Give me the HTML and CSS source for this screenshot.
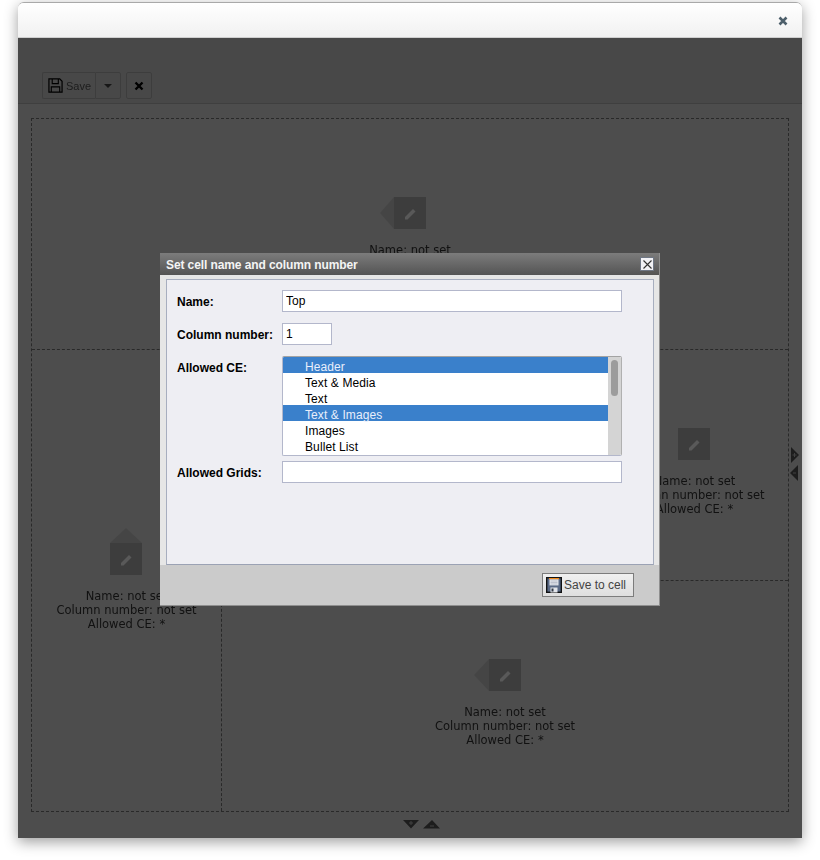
FILE: index.html
```html
<!DOCTYPE html>
<html lang="en">
<head>
<meta charset="utf-8">
<title>Grid editor</title>
<link rel="stylesheet" href="styles.css">
</head>
<body>
<svg class="defs" width="0" height="0" aria-hidden="true">
  <symbol id="pencil" viewBox="0 0 32 32">
    <path d="M11 20 L19 12 L21.5 14.5 L13.5 22.5 L11 22.5 Z" fill="#fff"/>
  </symbol>
</svg>
<div class="page">
  <div class="window">
    <div class="window-head">
      <svg class="head-close" width="10" height="10" viewBox="0 0 10 10"><path d="M1.5 1.5 L8.5 8.5 M8.5 1.5 L1.5 8.5" stroke="#4d5f6b" stroke-width="2.6"/></svg>
    </div>
    <div class="window-body">
      <div class="toolbar">
        <div class="btn-group">
          <div class="btn btn-save">
            <svg width="15" height="15" viewBox="0 0 16 16"><path d="M1 1 H12.5 L15 3.5 V15 H1 Z" fill="none" stroke="#000" stroke-width="1.3"/><path d="M4.5 1 V6 H11 V1 M3.5 15 V9.5 H12.5 V15" fill="none" stroke="#000" stroke-width="1.2"/></svg>
            <span>Save</span>
          </div>
          <div class="btn btn-caret"><span class="caret"></span></div>
        </div>
        <div class="btn btn-close">
          <svg width="10" height="10" viewBox="0 0 10 10"><path d="M1.5 1.5 L8.5 8.5 M8.5 1.5 L1.5 8.5" stroke="#000" stroke-width="2.4"/></svg>
        </div>
      </div>
      <div class="grid-area">
        <div class="grid">
          <div class="cell cell-top">
            <svg class="cell-icon" width="62" height="47" viewBox="0 0 62 47"><path d="M15 15 L1 31 L15 47 Z" class="tri"/><rect x="15" y="15" width="32" height="32" class="sq"/><use href="#pencil" x="15" y="15" width="32" height="32"/></svg>
            <div class="cell-text"><div>Name: not set</div><div>Column number: not set</div><div>Allowed CE: *</div></div>
          </div>
          <div class="cell cell-left">
            <svg class="cell-icon" width="62" height="47" viewBox="0 0 62 47"><path d="M15 15 L31 0 L47 15 Z" class="tri"/><rect x="15" y="15" width="32" height="32" class="sq"/><use href="#pencil" x="15" y="15" width="32" height="32"/></svg>
            <div class="cell-text"><div>Name: not set</div><div>Column number: not set</div><div>Allowed CE: *</div></div>
          </div>
          <div class="cell cell-mid"></div>
          <div class="cell cell-right">
            <svg class="cell-icon" width="62" height="47" viewBox="0 0 62 47"><rect x="15" y="15" width="32" height="32" class="sq"/><use href="#pencil" x="15" y="15" width="32" height="32"/></svg>
            <div class="cell-text"><div>Name: not set</div><div>Column number: not set</div><div>Allowed CE: *</div></div>
          </div>
          <div class="cell cell-bottom">
            <svg class="cell-icon" width="62" height="47" viewBox="0 0 62 47"><path d="M15 15 L0 31 L15 47 Z" class="tri"/><rect x="15" y="15" width="32" height="32" class="sq"/><use href="#pencil" x="15" y="15" width="32" height="32"/></svg>
            <div class="cell-text"><div>Name: not set</div><div>Column number: not set</div><div>Allowed CE: *</div></div>
          </div>
        </div>
      </div>
      <svg class="handle handle-right" width="9" height="34" viewBox="0 0 9 34"><path d="M1 0 L9 8 L1 16 Z M8 18 L0 26 L8 34 Z" class="handle-fill"/><path d="M2.5 8 H6.5 M4.5 6 V10 M3 26 H6" class="handle-mark"/></svg>
      <svg class="handle handle-bottom" width="38" height="9" viewBox="0 0 38 9"><path d="M0 0 H16 L8 8.5 Z M20 8.5 L29 0 L37 8.5 Z" class="handle-fill"/><path d="M6 3 H10 M8 1 V5 M27 6 H31" class="handle-mark"/></svg>
      <div class="overlay"></div>
    </div>
  </div>
</div>
<div class="dialog">
  <div class="dialog-title">
    <span class="dialog-caption">Set cell name and column number</span>
    <span class="dialog-x"><svg width="9" height="9" viewBox="0 0 9 9"><path d="M0.5 0.5 L8.5 8.5 M8.5 0.5 L0.5 8.5" stroke="#333" stroke-width="1.1"/></svg></span>
  </div>
  <div class="dialog-content">
    <div class="form-row">
      <label class="form-label">Name:</label>
      <input class="input input-wide" type="text" value="Top">
    </div>
    <div class="form-row">
      <label class="form-label">Column number:</label>
      <input class="input input-small" type="text" value="1">
    </div>
    <div class="form-row form-row-list">
      <label class="form-label">Allowed CE:</label>
      <div class="listbox">
        <ul class="options">
          <li class="selected">Header</li>
          <li>Text &amp; Media</li>
          <li>Text</li>
          <li class="selected">Text &amp; Images</li>
          <li>Images</li>
          <li>Bullet List</li>
        </ul>
        <div class="scrollbar"><div class="thumb"></div></div>
      </div>
    </div>
    <div class="form-row">
      <label class="form-label">Allowed Grids:</label>
      <input class="input input-wide" type="text" value="">
    </div>
  </div>
  <div class="dialog-footer">
    <button class="save-cell" type="button">
      <svg width="16" height="16" viewBox="0 0 16 16">
        <rect x="0.5" y="0.5" width="15" height="15" fill="#1d2229" stroke="#111"/>
        <rect x="1.5" y="1.5" width="13" height="13" fill="#5b6a86"/>
        <rect x="3" y="1" width="10" height="1.4" fill="#f08a1d"/>
        <rect x="3.5" y="2.4" width="9" height="6" fill="#e6e8ee"/>
        <path d="M4.5 4 H11.5 M4.5 5.5 H11.5 M4.5 7 H11.5" stroke="#aab0be" stroke-width="0.7"/>
        <rect x="4.5" y="10.5" width="7" height="5" fill="#e2e4ea"/>
        <rect x="5.5" y="11.5" width="2" height="3" fill="#333a47"/>
      </svg>
      <span>Save to cell</span>
    </button>
  </div>
</div>
</body>
</html>
```

FILE: styles.css
```css
html, body {
  margin: 0;
  padding: 0;
  height: 860px;
  overflow: hidden;
  background: #fff;
}

.defs {
  position: absolute;
}

.page {
  padding: 2px 18px 0;
  filter: drop-shadow(0 4px 7px rgba(0, 0, 0, 0.38));
}

.window {
  width: 784px;
  height: 836px;
  display: flex;
  flex-direction: column;
  border-radius: 6px 6px 0 0;
  overflow: hidden;
  box-sizing: border-box;
  border-top: 1px solid #a9a9a9;
}

.window-head {
  height: 34px;
  flex: none;
  display: flex;
  align-items: center;
  justify-content: flex-end;
  padding-right: 14px;
  background: linear-gradient(#ffffff, #f1f1f1);
  border-bottom: 1px solid #cfcfcf;
}

.head-close {
  margin-top: 2px;
}

.window-body {
  position: relative;
  flex: 1;
  background: #dcdcdc;
}

.overlay {
  position: absolute;
  inset: 0;
  background: rgba(0, 0, 0, 0.65);
}

.toolbar {
  height: 66px;
  box-sizing: border-box;
  padding: 34px 0 0 24px;
  display: flex;
  align-items: flex-start;
  gap: 5px;
  background: #cfcfcf;
  border-bottom: 1px solid #b4b4b4;
}

.btn-group {
  display: flex;
}

.btn {
  height: 27px;
  box-sizing: border-box;
  border: 1px solid #b0b0b0;
  border-radius: 2px;
  display: flex;
  align-items: center;
  justify-content: center;
}

.btn-save {
  width: 53px;
  justify-content: flex-start;
  gap: 3px;
  padding-left: 5px;
  border-right: 0;
  border-radius: 2px 0 0 2px;
  font: 11px "Liberation Sans", Arial, sans-serif;
  color: #555;
}

.btn-caret {
  width: 26px;
  padding-right: 1px;
  border-radius: 0 2px 2px 0;
}

.caret {
  width: 0;
  height: 0;
  border-left: 4px solid transparent;
  border-right: 4px solid transparent;
  border-top: 4px solid #444;
}

.btn-close {
  width: 26px;
}

.grid-area {
  padding: 14px 13px 0;
}

.grid {
  display: grid;
  width: 758px;
  height: 694px;
  box-sizing: border-box;
  grid-template-columns: 190px 379px 1fr;
  grid-template-rows: 231px 231px 1fr;
  border: 1px dashed #777;
}

.cell {
  display: flex;
  flex-direction: column;
  align-items: center;
  justify-content: center;
  box-sizing: border-box;
  padding-bottom: 2px;
}

.cell-top {
  grid-column: 1 / 4;
  grid-row: 1;
  border-bottom: 1px dashed #777;
}

.cell-left {
  grid-column: 1;
  grid-row: 2 / 4;
  border-right: 1px dashed #777;
}

.cell-mid {
  grid-column: 2;
  grid-row: 2;
  border-right: 1px dashed #777;
  border-bottom: 1px dashed #777;
}

.cell-right {
  grid-column: 3;
  grid-row: 2;
  border-bottom: 1px dashed #777;
}

.cell-bottom {
  grid-column: 2 / 4;
  grid-row: 3;
}

.cell-icon {
  display: block;
}

.cell-left .cell-icon,
.cell-right .cell-icon {
  margin-right: 1px;
}

.sq {
  fill: #b0b0b0;
}

.tri {
  fill: #c6c6c6;
}

.cell-text {
  margin-top: 14px;
  font: 11.5px/14px "DejaVu Sans", Verdana, sans-serif;
  color: #333;
  text-align: center;
  white-space: nowrap;
}

.handle {
  position: absolute;
  display: block;
}

.handle-fill {
  fill: #555;
}

.handle-mark {
  fill: none;
  stroke: #bbb;
  stroke-width: 1;
}

.handle-right {
  left: 772px;
  top: 409px;
}

.handle-bottom {
  left: 385px;
  top: 782px;
}

.dialog {
  position: absolute;
  left: 160px;
  top: 253px;
  width: 500px;
  height: 353px;
  box-sizing: border-box;
  display: flex;
  flex-direction: column;
  background: #e6e6e6;
  border-right: 1px solid #8f8f8f;
  border-bottom: 1px solid #8f8f8f;
  font-family: "Liberation Sans", Arial, sans-serif;
  font-size: 12px;
}

.dialog-title {
  height: 22px;
  flex: none;
  display: flex;
  align-items: center;
  justify-content: space-between;
  padding: 0 5px 0 6px;
  background: linear-gradient(#7c7c7c, #545454);
  color: #f4f4f4;
  font-weight: bold;
}

.dialog-caption {
  padding-top: 2px;
  letter-spacing: -0.1px;
}

.dialog-x {
  width: 12px;
  height: 12px;
  display: flex;
  align-items: center;
  justify-content: center;
  background: #f2f2f6;
  border: 1px solid #6f7785;
}

.dialog-content {
  flex: 1;
  margin: 4px 5px 0 6px;
  padding: 10px 0 0 10px;
  display: flex;
  flex-direction: column;
  gap: 11px;
  background: #eeeef3;
  border: 1px solid #a7aebf;
  border-bottom-color: #9ba2b4;
}

.form-row {
  display: flex;
  align-items: center;
}

.form-row-list {
  align-items: flex-start;
  margin-bottom: -6px;
}

.form-label {
  width: 105px;
  flex: none;
  padding-top: 1px;
  font-weight: bold;
  color: #000;
}

.form-row-list .form-label {
  padding-top: 5px;
}

.input {
  height: 22px;
  box-sizing: border-box;
  padding: 0 3px;
  margin: 0;
  background: #fff;
  border: 1px solid #b3b7cb;
  border-radius: 0;
  outline: 0;
  font: 12px "Liberation Sans", Arial, sans-serif;
  color: #000;
}

.input-wide {
  width: 340px;
}

.input-small {
  width: 50px;
}

.listbox {
  width: 340px;
  height: 100px;
  box-sizing: border-box;
  display: flex;
  background: #fff;
  border: 1px solid #b3b7cb;
  border-top-color: #a3a3a3;
  border-right-color: #b0b0b0;
  border-radius: 2px;
  overflow: hidden;
}

.options {
  flex: 1;
  margin: 0;
  padding: 0;
  list-style: none;
  letter-spacing: 0.1px;
}

.options li {
  height: 16px;
  line-height: 20px;
  padding-left: 22px;
  color: #000;
}

.options li.selected {
  background: #3a80cb;
  color: #e8eefb;
}

.scrollbar {
  width: 13px;
  flex: none;
  background: #d4d4d4;
  padding: 3px 0 0 3px;
  box-sizing: border-box;
}

.thumb {
  width: 7px;
  height: 36px;
  border-radius: 4px;
  background: #9c9c9c;
}

.dialog-footer {
  height: 40px;
  box-sizing: border-box;
  flex: none;
  display: flex;
  justify-content: flex-end;
  align-items: flex-start;
  padding: 8px 25px 0 0;
  background: #cbcbcb;
}

.save-cell {
  width: 92px;
  height: 24px;
  box-sizing: border-box;
  margin: 0;
  padding: 0 0 0 3px;
  display: flex;
  align-items: center;
  gap: 2px;
  background: linear-gradient(#f0f0f0, #dedede);
  border: 1px solid #7c7c7c;
  border-radius: 0;
  font: 12px "Liberation Sans", Arial, sans-serif;
  color: #444;
}
```
